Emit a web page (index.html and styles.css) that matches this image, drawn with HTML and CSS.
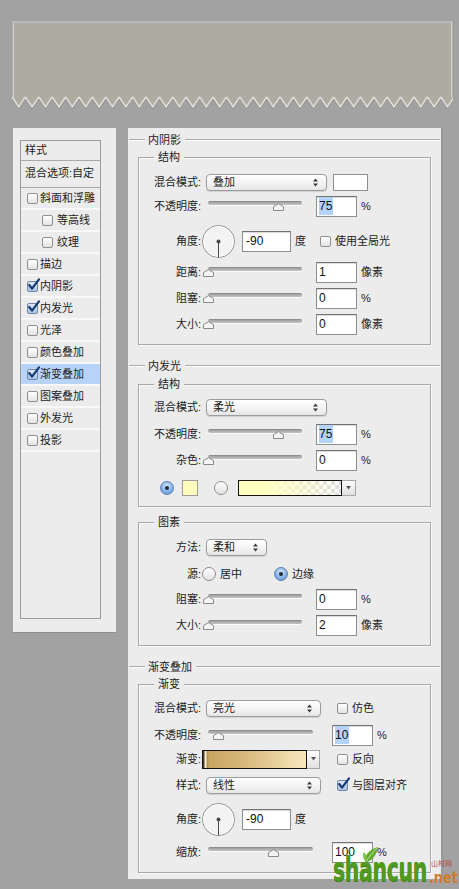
FILE: index.html
```html
<!DOCTYPE html>
<html lang="zh-CN">
<head>
<meta charset="utf-8">
<title>图层样式</title>
<link rel="stylesheet" href="styles.css">
</head>
<body>
<div class="banner">
  <svg width="441" height="88" viewBox="0 0 441 88">
    <defs>
      <pattern id="zig" x="0" y="72" width="13.4" height="16" patternUnits="userSpaceOnUse">
        <polygon points="0,0 13.4,0 13.4,4 6.7,14 0,4" fill="#adaba2"/>
        <polyline points="0,5.6 6.7,15.6 13.4,5.6" fill="none" stroke="#8d8d8b" stroke-width="1.2"/>
        <polyline points="0,4 6.7,14 13.4,4" fill="none" stroke="#e8e5dd" stroke-width="1.4"/>
      </pattern>
    </defs>
    <rect x="0" y="0" width="441" height="3" fill="#b5b9ba"/>
    <rect x="0" y="2" width="441" height="71" fill="#adaba2"/>
    <rect x="0" y="72" width="441" height="16" fill="url(#zig)"/>
    <line x1="1.5" y1="2" x2="1.5" y2="76" stroke="#d6d5cf"/>
    <line x1="439.5" y1="2" x2="439.5" y2="76" stroke="#d6d5cf"/>
  </svg>
</div>

<div class="main">
  <aside class="styles-panel">
    <div class="style-list">
      <div class="list-head">样式</div>
      <div class="list-blend">混合选项:自定</div>
      <div class="item"><span class="cb"></span>斜面和浮雕</div>
      <div class="item sub"><span class="cb"></span>等高线</div>
      <div class="item sub"><span class="cb"></span>纹理</div>
      <div class="item"><span class="cb"></span>描边</div>
      <div class="item"><span class="cb on"><svg width="14" height="14" viewBox="0 0 14 14"><path d="M2.2 7 L5 10.6 L12 1.4" fill="none" stroke="#163a74" stroke-width="2.2" stroke-linecap="round" stroke-linejoin="round"/></svg></span>内阴影</div>
      <div class="item"><span class="cb on"><svg width="14" height="14" viewBox="0 0 14 14"><path d="M2.2 7 L5 10.6 L12 1.4" fill="none" stroke="#163a74" stroke-width="2.2" stroke-linecap="round" stroke-linejoin="round"/></svg></span>内发光</div>
      <div class="item"><span class="cb"></span>光泽</div>
      <div class="item"><span class="cb"></span>颜色叠加</div>
      <div class="item active"><span class="cb on"><svg width="14" height="14" viewBox="0 0 14 14"><path d="M2.2 7 L5 10.6 L12 1.4" fill="none" stroke="#163a74" stroke-width="2.2" stroke-linecap="round" stroke-linejoin="round"/></svg></span>渐变叠加</div>
      <div class="item"><span class="cb"></span>图案叠加</div>
      <div class="item"><span class="cb"></span>外发光</div>
      <div class="item"><span class="cb"></span>投影</div>
    </div>
  </aside>

  <section class="props">
    <!-- 内阴影 -->
    <div class="sec-title">内阴影</div>
    <div class="group mt10">
      <div class="gtitle">结构</div>
      <div class="row h18 mt9">
        <span class="lbl">混合模式:</span>
        <div class="select w121"><span>叠加</span><svg class="ud" width="5" height="9" viewBox="0 0 5 9"><path d="M0 3.6 L2.5 0.4 L5 3.6Z M0 5.4 L2.5 8.6 L5 5.4Z" fill="#3a3a3a"/></svg></div>
        <span class="swatch sw-white"></span>
      </div>
      <div class="row h22 mt4">
        <span class="lbl">不透明度:</span>
        <div class="slider w94"><div class="track"></div><svg class="thumb" style="left:75%" width="11" height="8" viewBox="0 0 11 8"><path d="M0.5 7.5 V3.6 L5.5 0.6 L10.5 3.6 V7.5Z" fill="#f4f4f4" stroke="#8a8a8a"/></svg></div>
        <div class="num ml14"><span class="hl">75</span></div>
        <span class="unit">%</span>
      </div>
      <div class="row h34 mt7">
        <span class="lbl">角度:</span>
        <svg class="dial" width="33" height="33" viewBox="0 0 33 33"><circle cx="16.5" cy="16.5" r="16" fill="#f3f3f3" stroke="#8c8c8c"/><circle cx="16.5" cy="16.5" r="15" fill="none" stroke="#fff"/><line x1="16.5" y1="16.5" x2="16.5" y2="32.5" stroke="#4a4a4a"/><circle cx="16.5" cy="16.5" r="2" fill="#4a4a4a"/></svg>
        <div class="num w49">-90</div>
        <span class="unit">度</span>
        <span class="cb ml14"></span>
        <span class="cbl">使用全局光</span>
      </div>
      <div class="row h22 mt3">
        <span class="lbl">距离:</span>
        <div class="slider w94"><div class="track"></div><svg class="thumb" style="left:0%" width="11" height="8" viewBox="0 0 11 8"><path d="M0.5 7.5 V3.6 L5.5 0.6 L10.5 3.6 V7.5Z" fill="#f4f4f4" stroke="#8a8a8a"/></svg></div>
        <div class="num ml14">1</div>
        <span class="unit">像素</span>
      </div>
      <div class="row h22 mt4">
        <span class="lbl">阻塞:</span>
        <div class="slider w94"><div class="track"></div><svg class="thumb" style="left:0%" width="11" height="8" viewBox="0 0 11 8"><path d="M0.5 7.5 V3.6 L5.5 0.6 L10.5 3.6 V7.5Z" fill="#f4f4f4" stroke="#8a8a8a"/></svg></div>
        <div class="num ml14">0</div>
        <span class="unit">%</span>
      </div>
      <div class="row h22 mt4">
        <span class="lbl">大小:</span>
        <div class="slider w94"><div class="track"></div><svg class="thumb" style="left:0%" width="11" height="8" viewBox="0 0 11 8"><path d="M0.5 7.5 V3.6 L5.5 0.6 L10.5 3.6 V7.5Z" fill="#f4f4f4" stroke="#8a8a8a"/></svg></div>
        <div class="num ml14">0</div>
        <span class="unit">像素</span>
      </div>
    </div>

    <!-- 内发光 -->
    <div class="sec-title mt14">内发光</div>
    <div class="group mt11">
      <div class="gtitle">结构</div>
      <div class="row h18 mt7">
        <span class="lbl">混合模式:</span>
        <div class="select w121"><span>柔光</span><svg class="ud" width="5" height="9" viewBox="0 0 5 9"><path d="M0 3.6 L2.5 0.4 L5 3.6Z M0 5.4 L2.5 8.6 L5 5.4Z" fill="#3a3a3a"/></svg></div>
      </div>
      <div class="row h22 mt7">
        <span class="lbl">不透明度:</span>
        <div class="slider w94"><div class="track"></div><svg class="thumb" style="left:75%" width="11" height="8" viewBox="0 0 11 8"><path d="M0.5 7.5 V3.6 L5.5 0.6 L10.5 3.6 V7.5Z" fill="#f4f4f4" stroke="#8a8a8a"/></svg></div>
        <div class="num ml14"><span class="hl">75</span></div>
        <span class="unit">%</span>
      </div>
      <div class="row h22 mt4">
        <span class="lbl">杂色:</span>
        <div class="slider w94"><div class="track"></div><svg class="thumb" style="left:0%" width="11" height="8" viewBox="0 0 11 8"><path d="M0.5 7.5 V3.6 L5.5 0.6 L10.5 3.6 V7.5Z" fill="#f4f4f4" stroke="#8a8a8a"/></svg></div>
        <div class="num ml14">0</div>
        <span class="unit">%</span>
      </div>
      <div class="row h18 mt8 fill-row">
        <span class="radio on ml21"></span>
        <span class="swatch sw-yellow"></span>
        <span class="radio ml16"></span>
        <span class="gbar gbar-glow"></span>
        <span class="gbtn"><svg width="5" height="4" viewBox="0 0 5 4"><path d="M0 0 H5 L2.5 3.5Z" fill="#555"/></svg></span>
      </div>
    </div>

    <div class="group mt15">
      <div class="gtitle">图素</div>
      <div class="row h18 mt9">
        <span class="lbl">方法:</span>
        <div class="select w61"><span>柔和</span><svg class="ud" width="5" height="9" viewBox="0 0 5 9"><path d="M0 3.6 L2.5 0.4 L5 3.6Z M0 5.4 L2.5 8.6 L5 5.4Z" fill="#3a3a3a"/></svg></div>
      </div>
      <div class="row h16 mt10">
        <span class="lbl">源:</span>
        <span class="radio ml1"></span>
        <span class="cbl ml3">居中</span>
        <span class="radio on ml32"></span>
        <span class="cbl ml3">边缘</span>
      </div>
      <div class="row h22 mt6">
        <span class="lbl">阻塞:</span>
        <div class="slider w94"><div class="track"></div><svg class="thumb" style="left:0%" width="11" height="8" viewBox="0 0 11 8"><path d="M0.5 7.5 V3.6 L5.5 0.6 L10.5 3.6 V7.5Z" fill="#f4f4f4" stroke="#8a8a8a"/></svg></div>
        <div class="num ml14">0</div>
        <span class="unit">%</span>
      </div>
      <div class="row h22 mt4">
        <span class="lbl">大小:</span>
        <div class="slider w94"><div class="track"></div><svg class="thumb" style="left:0%" width="11" height="8" viewBox="0 0 11 8"><path d="M0.5 7.5 V3.6 L5.5 0.6 L10.5 3.6 V7.5Z" fill="#f4f4f4" stroke="#8a8a8a"/></svg></div>
        <div class="num ml14">2</div>
        <span class="unit">像素</span>
      </div>
    </div>

    <!-- 渐变叠加 -->
    <div class="sec-title mt14">渐变叠加</div>
    <div class="group mt10">
      <div class="gtitle">渐变</div>
      <div class="row h18 mt8">
        <span class="lbl">混合模式:</span>
        <div class="select w115"><span>亮光</span><svg class="ud" width="5" height="9" viewBox="0 0 5 9"><path d="M0 3.6 L2.5 0.4 L5 3.6Z M0 5.4 L2.5 8.6 L5 5.4Z" fill="#3a3a3a"/></svg></div>
        <span class="cb ml16"></span>
        <span class="cbl">仿色</span>
      </div>
      <div class="row h22 mt7">
        <span class="lbl">不透明度:</span>
        <div class="slider w105"><div class="track"></div><svg class="thumb" style="left:10%" width="11" height="8" viewBox="0 0 11 8"><path d="M0.5 7.5 V3.6 L5.5 0.6 L10.5 3.6 V7.5Z" fill="#f4f4f4" stroke="#8a8a8a"/></svg></div>
        <div class="num ml19"><span class="hl">10</span></div>
        <span class="unit">%</span>
      </div>
      <div class="row h20 mt3">
        <span class="lbl">渐变:</span>
        <span class="gbar gbar-gold"></span>
        <span class="gbtn tall"><svg width="5" height="4" viewBox="0 0 5 4"><path d="M0 0 H5 L2.5 3.5Z" fill="#555"/></svg></span>
        <span class="cb ml17"></span>
        <span class="cbl">反向</span>
      </div>
      <div class="row h18 mt7">
        <span class="lbl">样式:</span>
        <div class="select w115"><span>线性</span><svg class="ud" width="5" height="9" viewBox="0 0 5 9"><path d="M0 3.6 L2.5 0.4 L5 3.6Z M0 5.4 L2.5 8.6 L5 5.4Z" fill="#3a3a3a"/></svg></div>
        <span class="cb on ml16"><svg width="14" height="14" viewBox="0 0 14 14"><path d="M2.2 7 L5 10.6 L12 1.4" fill="none" stroke="#163a74" stroke-width="2.2" stroke-linecap="round" stroke-linejoin="round"/></svg></span>
        <span class="cbl">与图层对齐</span>
      </div>
      <div class="row h34 mt8">
        <span class="lbl">角度:</span>
        <svg class="dial" width="33" height="33" viewBox="0 0 33 33"><circle cx="16.5" cy="16.5" r="16" fill="#f3f3f3" stroke="#8c8c8c"/><circle cx="16.5" cy="16.5" r="15" fill="none" stroke="#fff"/><line x1="16.5" y1="16.5" x2="16.5" y2="32.5" stroke="#4a4a4a"/><circle cx="16.5" cy="16.5" r="2" fill="#4a4a4a"/></svg>
        <div class="num w49">-90</div>
        <span class="unit">度</span>
      </div>
      <div class="row h22 mt5">
        <span class="lbl">缩放:</span>
        <div class="slider w105"><div class="track"></div><svg class="thumb" style="left:62%" width="11" height="8" viewBox="0 0 11 8"><path d="M0.5 7.5 V3.6 L5.5 0.6 L10.5 3.6 V7.5Z" fill="#f4f4f4" stroke="#8a8a8a"/></svg></div>
        <div class="num ml19">100</div>
        <span class="unit">%</span>
      </div>
    </div>
  </section>
</div>

<div class="watermark">
  <svg class="leaf" width="18" height="18" viewBox="0 0 18 18"><path d="M3 17 C2 10 6 4 16 1 C15 9 10 15 3 17Z" fill="#62ad2f"/><path d="M3 17 C7 11 10 7 15 2" stroke="#d8eec8" stroke-width="0.8" fill="none"/><path d="M4 16 C1 13 0 9 2 6 C5 9 5 13 4 16Z" fill="#7cc44a"/></svg>
  <span class="wm-main">shancun</span>
  <span class="wm-cn">山村网</span>
  <span class="wm-net">.net</span>
</div>
</body>
</html>
```

FILE: styles.css
```css
* { box-sizing: border-box; }
html, body { margin: 0; padding: 0; }
body {
  width: 459px;
  height: 889px;
  overflow: hidden;
  position: relative;
  background: #a2a2a2;
  font-family: "Liberation Sans", "Noto Sans CJK SC", sans-serif;
  font-size: 11px;
  color: #1c1c1c;
}

/* banner */
.banner { margin: 21px 0 0 12px; width: 441px; height: 88px; }
.banner svg { display: block; }

.main { display: flex; align-items: flex-start; margin-top: 19px; }

/* left styles list */
.styles-panel {
  margin-left: 13px;
  width: 103px;
  height: 504px;
  background: #ececec;
  padding: 12px 15px 13px 7px;
  box-shadow: 0 1px 0 #8f8f8f;
}
.style-list { height: 100%; border: 1px solid #9b9b9b; }
.list-head {
  height: 20px; line-height: 18px; padding-left: 4px;
  border-bottom: 1px solid #a9a9a9;
}
.list-blend {
  height: 27px; line-height: 24px; padding-left: 4px;
  border-bottom: 1px solid #a9a9a9;
}
.item {
  height: 22px;
  display: flex; align-items: center; gap: 2px;
  padding-left: 6px;
  line-height: 14px;
  border-bottom: 2px solid #f8f8f8;
}
.item.sub { padding-left: 21px; gap: 4px; }
.item.active { background: #b7d3f8; }

/* checkbox */
.cb {
  position: relative;
  flex: none;
  width: 11px; height: 11px;
  border: 1px solid #8f8f8f;
  border-radius: 2px;
  background: linear-gradient(#ffffff, #e3e3e3);
}
.cb.on { background: linear-gradient(#dfe9f7, #a9c3e6); border-color: #6f86a8; }
.cb svg { position: absolute; left: -1px; top: -4px; }

/* radio */
.radio {
  position: relative;
  flex: none;
  width: 14px; height: 14px;
  border: 1px solid #8d8d8d;
  border-radius: 50%;
  background: linear-gradient(#ffffff, #e2e2e2);
}
.radio.on {
  border-color: #5e7fae;
  background: radial-gradient(circle at 50% 35%, #d7e8fb, #7eaee6 60%, #5d93d6);
}
.radio.on::after {
  content: "";
  position: absolute;
  left: 4px; top: 4px;
  width: 4px; height: 4px;
  border-radius: 50%;
  background: #1d2a3c;
}

/* right panel */
.props {
  margin-left: 12px;
  width: 313px;
  background: #ececec;
  padding: 5px 0 6px;
  box-shadow: 2px 0 0 #989898;
}
.sec-title {
  display: flex; align-items: center;
  height: 14px; line-height: 14px;
  margin: 0 1px;
}
.sec-title::before,
.sec-title::after {
  content: "";
  height: 0;
  border-top: 1px solid #ababab;
  border-bottom: 1px solid #fbfbfb;
}
.sec-title::before { width: 16px; margin-right: 3px; }
.sec-title::after { flex: 1; margin-left: 4px; }

.group {
  margin-left: 10px; margin-right: 10px;
  border: 1px solid #a8a8a8;
  box-shadow: inset 1px 1px 0 #fafafa, 1px 1px 0 #fafafa;
  padding-bottom: 9px;
}
.gtitle {
  width: max-content;
  height: 14px; line-height: 14px;
  margin: -8px 0 0 15px;
  padding: 0 4px;
  background: #ececec;
}

.row { display: flex; align-items: center; line-height: 14px; }
.h16 { height: 16px; }
.h18 { height: 18px; }
.h20 { height: 20px; }
.h22 { height: 22px; }
.h34 { height: 34px; }
.mt3 { margin-top: 3px; }
.mt4 { margin-top: 4px; }
.mt5 { margin-top: 5px; }
.mt6 { margin-top: 6px; }
.mt7 { margin-top: 7px; }
.mt8 { margin-top: 8px; }
.mt9 { margin-top: 9px; }
.mt10 { margin-top: 10px; }
.mt11 { margin-top: 11px; }
.mt14 { margin-top: 14px; }
.mt15 { margin-top: 15px; }
.ml1 { margin-left: 1px; }
.ml3 { margin-left: 3px; }
.ml14 { margin-left: 14px; }
.ml16 { margin-left: 16px; }
.ml17 { margin-left: 17px; }
.ml19 { margin-left: 19px; }
.ml21 { margin-left: 21px; }
.ml32 { margin-left: 32px; }

.lbl { width: 62px; flex: none; text-align: right; }

/* select */
.select {
  flex: none;
  display: flex; align-items: center;
  height: 17px;
  margin-left: 5px;
  padding: 0 8px 0 6px;
  border: 1px solid #9c9c9c;
  border-radius: 4px;
  background: linear-gradient(#ffffff, #f3f3f3 55%, #e6e6e6);
  box-shadow: 0 1px 1px rgba(0, 0, 0, 0.12);
}
.select .ud { margin-left: auto; }
.w121 { width: 121px; }
.w115 { width: 115px; }
.w61 { width: 61px; }

.swatch { flex: none; border: 1px solid #8e8e8e; }
.sw-white { margin-left: 6px; width: 35px; height: 17px; background: #fff; }
.sw-yellow { margin-left: 8px; width: 16px; height: 16px; background: #fffcbc; border-color: #9c9c9c; }

/* slider */
.slider { position: relative; flex: none; height: 22px; margin-left: 7px; }
.w94 { width: 94px; }
.w105 { width: 105px; }
.track {
  margin-top: 6px;
  height: 4px;
  border-radius: 2px;
  background: linear-gradient(#7f7f7f, #a9a9a9 40%, #c4c4c4);
  box-shadow: 0 1px 0 #fafafa;
}
.thumb { position: absolute; top: 8px; margin-left: -5.5px; }

/* numeric input */
.num {
  flex: none;
  width: 41px; height: 21px;
  padding-left: 2px;
  border: 1px solid #8e8e8e;
  border-top-color: #727272;
  background: #fff;
  box-shadow: inset 0 1px 1px rgba(0, 0, 0, 0.15);
  font-family: "Liberation Sans", sans-serif;
  font-size: 12px;
  line-height: 19px;
  color: #111;
}
.num.w49 { width: 49px; margin-left: 7px; padding-left: 3px; }
.hl { background: #b4d3fb; padding: 2px 1px 2px 0; }
.unit { margin-left: 4px; font-size: 11px; }
.cbl { margin-left: 4px; }

.dial { flex: none; margin-left: 1px; display: block; }

/* gradient bars */
.gbar { flex: none; border: 1px solid #111; }
.gbar-glow {
  margin-left: 10px;
  width: 104px; height: 16px;
  background:
    linear-gradient(to right, #ffffc2 25%, rgba(255, 255, 194, 0) 100%),
    conic-gradient(#dcdcdc 25%, #ffffff 0 50%, #dcdcdc 0 75%, #ffffff 0) 0 0 / 8px 8px;
}
.gbar-gold {
  margin-left: 1px;
  width: 105px; height: 19px;
  background: linear-gradient(to right,
    #4e3f25 0, #4e3f25 1px, #f2e7cc 2px, #fffaf0 3px, #a98a4f 4px,
    #c9a660 6px, #d3b273 30%, #e2c78f 60%, #f0dcaf 85%, #f5e5bf 100%);
}
.gbtn {
  flex: none;
  display: flex; align-items: center; justify-content: center;
  width: 14px; height: 16px;
  border: 1px solid #a6a6a6;
  border-left: none;
  background: linear-gradient(#fdfdfd, #e0e0e0);
}
.gbtn.tall { width: 13px; height: 19px; }

/* watermark overlay */
.watermark {
  position: absolute;
  left: 330px; top: 844px;
  width: 129px; height: 45px;
}
.leaf { position: absolute; left: 32px; top: 2px; }
.wm-main {
  position: absolute;
  left: 3px; top: 13px;
  font-family: "DejaVu Sans", sans-serif;
  font-weight: bold;
  font-size: 34px;
  line-height: 24px;
  color: #4f9a1f;
  text-shadow: 0 1px 0 #3d7d16;
  transform: scaleX(0.6);
  transform-origin: 0 0;
  letter-spacing: -0.5px;
}
.wm-cn {
  position: absolute;
  left: 101px; top: 15px;
  font-family: "Noto Sans CJK SC", sans-serif;
  font-size: 7px;
  line-height: 8px;
  color: #b6463a;
}
.wm-net {
  position: absolute;
  left: 99px; top: 26px;
  font-family: "DejaVu Sans", sans-serif;
  font-weight: bold;
  font-size: 16px;
  line-height: 15px;
  color: #cf7b2a;
  transform: scaleX(0.8);
  transform-origin: 0 0;
}
```
